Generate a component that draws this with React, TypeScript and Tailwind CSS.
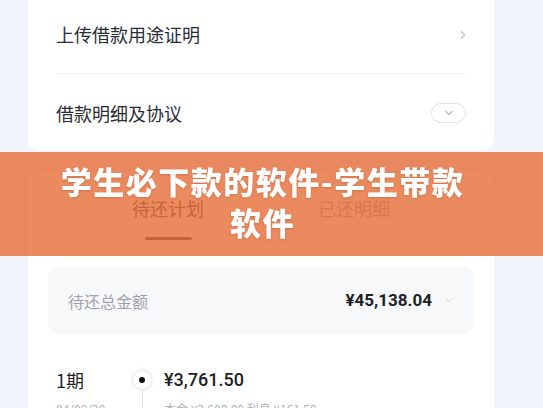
import { ChevronRight, ChevronDown } from "lucide-react";

const font = { fontFamily: '"Noto Sans CJK SC", "Noto Sans", sans-serif' };
const numFont = { fontFamily: 'Roboto, "Noto Sans CJK SC", sans-serif' };

export default function App() {
  return (
    <div
      className="relative w-[543px] h-[408px] overflow-hidden bg-[#f2f5fb]"
      style={font}
    >
      {/* top card */}
      <div className="ml-[28px] w-[466px] bg-white rounded-b-[12px] px-[28px]">
        <div className="h-[74px] flex items-center justify-between pb-[4px] border-b border-[#eeeff3]">
          <span className="text-[18px] text-[#2b2d33]">上传借款用途证明</span>
          <ChevronRight className="w-[14px] h-[14px] text-[#c4c6cf] mr-[-4px]" strokeWidth={2} />
        </div>
        <div className="h-[76px] flex items-center justify-between pt-[2px]">
          <span className="text-[18px] text-[#2b2d33]">借款明细及协议</span>
          <div className="w-[35px] h-[20px] rounded-full border border-[#dfe1ea] flex items-center justify-center">
            <ChevronDown className="w-[12px] h-[12px] text-[#b8bbcc]" strokeWidth={3} />
          </div>
        </div>
      </div>

      {/* second card */}
      <div className="ml-[28px] mt-[22px] w-[466px] bg-white rounded-t-[12px] pb-[40px]">
        <div className="flex h-[68px] pt-[23px] pl-[80px] gap-[66px]">
          <div className="w-[120px] flex flex-col items-center">
            <span className="text-[18px] leading-[26px] text-[#2b2d33]">待还计划</span>
            <div className="mt-[16px] w-[47px] h-[3px] rounded-full bg-[#2b2d33]" />
          </div>
          <div className="w-[120px] flex flex-col items-center">
            <span className="text-[18px] leading-[26px] text-[#9a9ca6]">已还明细</span>
          </div>
        </div>
        <div className="mx-[20px] mt-[27px] h-[67px] rounded-[10px] bg-[#f7f8fa] flex items-center justify-between pl-[20px] pr-[20px]">
          <span className="text-[16px] text-[#a0a2aa]">待还总金额</span>
          <div className="flex items-center gap-[11px]">
            <span className="text-[17px] font-bold text-[#1d1f24]" style={numFont}>
              ¥45,138.04
            </span>
            <ChevronDown className="w-[11px] h-[11px] text-[#c9cbd2]" strokeWidth={2} />
          </div>
        </div>
        <div className="flex mt-[32px] pl-[28px]">
          <div className="w-[76px] flex flex-col">
            <span className="text-[18px] leading-[28px] text-[#1d1f24]">1期</span>
            <span className="text-[12px] text-[#b0b2ba] mt-[6px]">04/09/20</span>
          </div>
          <div className="w-[20px] flex flex-col items-center">
            <div className="mt-[5px] w-[18px] h-[18px] rounded-full bg-white shadow-[0_0_4px_rgba(120,130,170,0.35)] flex items-center justify-center">
              <div className="w-[6px] h-[6px] rounded-full bg-[#111]" />
            </div>
            <div className="w-px h-[30px] bg-[#dfe1ea]" />
          </div>
          <div className="flex flex-col pl-[12px]">
            <span className="text-[18px] leading-[28px] font-medium text-[#1d1f24]" style={numFont}>
              ¥3,761.50
            </span>
            <span className="text-[12px] text-[#b0b2ba] mt-[6px] whitespace-nowrap">
              本金 ¥3,600.00  利息 ¥161.50
            </span>
          </div>
        </div>
      </div>

      {/* overlay banner */}
      <div className="absolute left-0 top-[152px] w-[543px] h-[104px] bg-[rgba(230,112,58,0.82)] flex items-center justify-center pr-[18px]">
        <p className="text-center text-[31px] font-black leading-[41px] text-white tracking-[1.5px] mt-[-6px] drop-shadow-[0_1px_1px_rgba(120,50,20,0.25)]">
          学生必下款的软件-学生带款
          <br />
          软件
        </p>
      </div>
    </div>
  );
}
